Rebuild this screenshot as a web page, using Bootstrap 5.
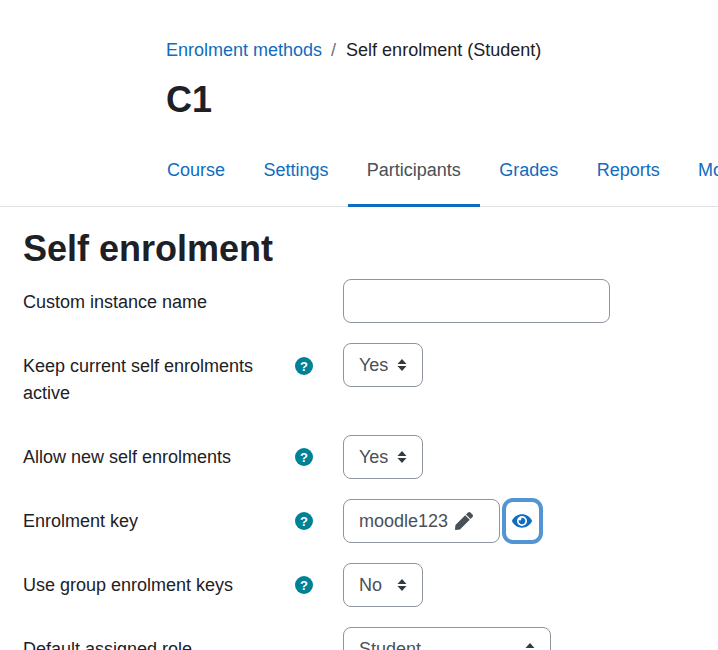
<!DOCTYPE html>
<html lang="en">
<head>
    <meta charset="UTF-8">
    <meta name="viewport" content="width=device-width, initial-scale=1.0">
    <title>Self enrolment</title>
    <link href="https://cdn.jsdelivr.net/npm/bootstrap@5.3.0/dist/css/bootstrap.min.css" rel="stylesheet">
    <style>
        html, body { height: 650px; overflow: hidden; }
        body { font-family: "Liberation Sans", Arial, sans-serif; font-size: 18px; line-height: 27px; color: #1d2125; }
        a { color: #0f6cbf; text-decoration: none; }
        .page-top { padding: 37px 0 0 166px; }
        .crumbs { margin: 0; --bs-breadcrumb-divider-color: #6a737b; --bs-breadcrumb-item-active-color: #1d2125; --bs-breadcrumb-margin-bottom: 0; }
        .crumbs .breadcrumb-item + .breadcrumb-item { padding-left: 9px; }
        .crumbs .breadcrumb-item + .breadcrumb-item::before { padding-right: 10px; }
        .course-title { font-size: 36px; line-height: 43px; font-weight: 700; margin: 14px 0 0; color: #1d2125; }
        .course-tabs { flex-wrap: nowrap; overflow: hidden; padding-left: 147.8px; margin-top: 29px; box-shadow: inset 0 -1px 0 #dee2e6; height: 57px; }
        .course-tabs .nav-link { padding: 7px 19.2px 0; height: 57px; color: #0f6cbf; white-space: nowrap; font-size: 18px; line-height: 27px; }
        .course-tabs .nav-link.active { color: #495057; border-bottom: 3px solid #0f6cbf; }
        .page-main { padding: 0 23px; }
        .page-main h2 { font-size: 36px; line-height: 43px; font-weight: 700; margin: 20px 0 9px; color: #1d2125; }
        .form-line { display: flex; margin-bottom: 20px; }
        .line-tall { min-height: 72px; }
        .line-label { width: 272px; padding-top: 9px; flex-shrink: 0; }
        .line-label-low { padding-top: 10px; }
        .line-help { width: 48px; padding-top: 9px; flex-shrink: 0; }
        .help-dot { display: block; width: 18px; height: 18px; margin-top: 4px; }
        .line-tall .help-dot { margin-top: 5px; }
        .field-text, .field-select { height: 44px; border: 1px solid #8f959e; border-radius: 8px; font-size: 18px; line-height: 27px; color: #495057; padding: 8px 15px; }
        .field-text { width: 267px; }
        .field-select { padding-right: 30px; background-image: url("data:image/svg+xml,%3csvg xmlns='http://www.w3.org/2000/svg' viewBox='0 0 10 14'%3e%3cpath fill='%23343a40' d='M5 1 L9.500 6 H.5Z M5 13 L.5 8 H9.500Z'/%3e%3c/svg%3e"); background-position: right 15px center; background-size: 10px 14px; }
        .field-short { width: 80px; }
        .field-role { width: 208px; }
        .key-box { display: flex; align-items: center; gap: 7px; width: 157px; height: 44px; border: 1px solid #8f959e; border-radius: 8px; padding: 0 15px; color: #495057; }
        .eye-btn { display: flex; flex-shrink: 0; align-items: center; justify-content: center; width: 41px; height: 46px; margin: -1px 0 -2px 1.5px; padding: 0; background: #fff; border: 4px solid #5295d2; border-radius: 11px; }
    </style>
</head>
<body>
    <header class="page-top">
        <nav>
            <ol class="breadcrumb crumbs">
                <li class="breadcrumb-item"><a href="#">Enrolment methods</a></li>
                <li class="breadcrumb-item active">Self enrolment (Student)</li>
            </ol>
        </nav>
        <h1 class="course-title">C1</h1>
    </header>

    <ul class="nav course-tabs">
        <li class="nav-item"><a class="nav-link" href="#">Course</a></li>
        <li class="nav-item"><a class="nav-link" href="#">Settings</a></li>
        <li class="nav-item"><a class="nav-link active" href="#">Participants</a></li>
        <li class="nav-item"><a class="nav-link" href="#">Grades</a></li>
        <li class="nav-item"><a class="nav-link" href="#">Reports</a></li>
        <li class="nav-item"><a class="nav-link" href="#">More</a></li>
    </ul>

    <main class="page-main">
        <h2>Self enrolment</h2>
        <form>
            <div class="form-line">
                <label class="line-label line-label-low">Custom instance name</label>
                <div class="line-help"></div>
                <input type="text" class="form-control field-text">
            </div>
            <div class="form-line line-tall">
                <label class="line-label line-label-low">Keep current self enrolments active</label>
                <div class="line-help"><svg class="help-dot" viewBox="0 0 18 18"><circle cx="9" cy="9" r="9" fill="#008196"/><text x="9" y="13.500" text-anchor="middle" font-family="Liberation Sans" font-size="13" font-weight="700" fill="#fff">?</text></svg></div>
                <select class="form-select field-select field-short"><option>Yes</option></select>
            </div>
            <div class="form-line">
                <label class="line-label">Allow new self enrolments</label>
                <div class="line-help"><svg class="help-dot" viewBox="0 0 18 18"><circle cx="9" cy="9" r="9" fill="#008196"/><text x="9" y="13.500" text-anchor="middle" font-family="Liberation Sans" font-size="13" font-weight="700" fill="#fff">?</text></svg></div>
                <select class="form-select field-select field-short"><option>Yes</option></select>
            </div>
            <div class="form-line">
                <label class="line-label">Enrolment key</label>
                <div class="line-help"><svg class="help-dot" viewBox="0 0 18 18"><circle cx="9" cy="9" r="9" fill="#008196"/><text x="9" y="13.500" text-anchor="middle" font-family="Liberation Sans" font-size="13" font-weight="700" fill="#fff">?</text></svg></div>
                <div class="key-box">
                    <span>moodle123</span>
                    <svg width="18" height="18" viewBox="0 0 512 512"><path fill="#495057" d="M290.700 93.200l128 128-278 278-114.100 12.600C11.300 513.500-1.600 500.600.100 485.300l12.700-114.200 277.900-277.900zm207.200-19.100l-60.100-60.100c-18.700-18.700-49.100-18.700-67.900 0l-56.600 56.600 128 128 56.600-56.600c18.800-18.800 18.800-49.200 0-67.900z"/></svg>
                </div>
                <button type="button" class="eye-btn" aria-label="Show">
                    <svg width="20" height="18" viewBox="0 0 576 512"><path fill="#0f6cbf" d="M572.520 241.400C518.290 135.590 410.930 64 288 64S57.680 135.640 3.480 241.410a32.350 32.350 0 0 0 0 29.190C57.710 376.410 165.070 448 288 448s230.320-71.640 284.520-177.410a32.350 32.350 0 0 0 0-29.190zM288 400a144 144 0 1 1 144-144 143.930 143.930 0 0 1-144 144zm0-240a95.310 95.310 0 0 0-25.310 3.790 47.850 47.850 0 0 1-66.900 66.900A95.780 95.780 0 1 0 288 160z"/></svg>
                </button>
            </div>
            <div class="form-line">
                <label class="line-label">Use group enrolment keys</label>
                <div class="line-help"><svg class="help-dot" viewBox="0 0 18 18"><circle cx="9" cy="9" r="9" fill="#008196"/><text x="9" y="13.500" text-anchor="middle" font-family="Liberation Sans" font-size="13" font-weight="700" fill="#fff">?</text></svg></div>
                <select class="form-select field-select field-short"><option>No</option></select>
            </div>
            <div class="form-line">
                <label class="line-label">Default assigned role</label>
                <div class="line-help"></div>
                <select class="form-select field-select field-role"><option>Student</option></select>
            </div>
        </form>
    </main>
</body>
</html>
